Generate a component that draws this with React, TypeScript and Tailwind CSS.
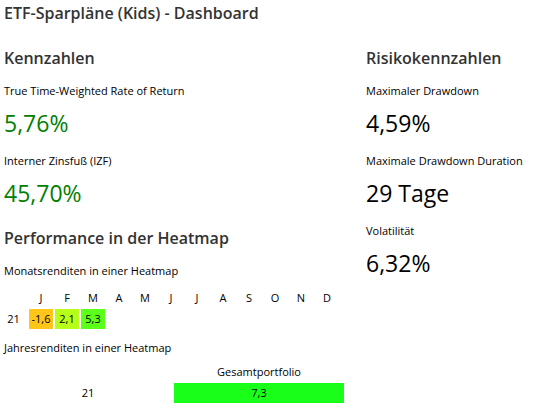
import React from "react";

interface Metric {
    label: string;
    value: string;
    green?: boolean;
}

const kennzahlen: Metric[] = [
    { label: "True Time-Weighted Rate of Return", value: "5,76%", green: true },
    { label: "Interner Zinsfuß (IZF)", value: "45,70%", green: true },
];

const risiko: Metric[] = [
    { label: "Maximaler Drawdown", value: "4,59%" },
    { label: "Maximale Drawdown Duration", value: "29 Tage" },
    { label: "Volatilität", value: "6,32%" },
];

const months = ["J", "F", "M", "A", "M", "J", "J", "A", "S", "O", "N", "D"];

const monthCells = [
    { value: "-1,6", color: "bg-[#ffc61a]" },
    { value: "2,1", color: "bg-[#b7ff1a]" },
    { value: "5,3", color: "bg-[#5bff1a]" },
];

const MetricBlock = ({ metric }: { metric: Metric }): JSX.Element => (
    <div className="h-[70px]">
        <p className="text-[11px] leading-[16px] text-black">{metric.label}</p>
        <p
            className={`mt-[8px] text-[23px] leading-[32px] ${
                metric.green ? "text-[#008000]" : "text-black"
            }`}
        >
            {metric.value}
        </p>
    </div>
);

const App = (): JSX.Element => {
    return (
        <div
            className="w-[558px] h-[419px] bg-white px-[4px] pt-[2px] overflow-hidden"
            style={{ fontFamily: '"Open Sans", "Noto Sans", sans-serif' }}
        >
            <h1 className="text-[16px] leading-[22px] font-semibold text-[#333]">
                ETF-Sparpläne (Kids) - Dashboard
            </h1>

            <div className="flex mt-[23px]">
                {/* linke Spalte */}
                <div className="w-[362px]">
                    <h2 className="text-[16px] leading-[22px] font-semibold text-[#333]">
                        Kennzahlen
                    </h2>
                    <div className="mt-[14px]">
                        {kennzahlen.map((m) => (
                            <MetricBlock key={m.label} metric={m} />
                        ))}
                    </div>

                    <h2 className="mt-[4px] text-[16px] leading-[22px] font-semibold text-[#333]">
                        Performance in der Heatmap
                    </h2>
                    <p className="mt-[14px] text-[11px] leading-[16px] text-black">
                        Monatsrenditen in einer Heatmap
                    </p>

                    {/* Monats-Heatmap */}
                    <div className="mt-[11px] grid grid-cols-[23px_repeat(12,24px)] gap-x-[2px] text-[11px] text-black">
                        <div />
                        {months.map((m, i) => (
                            <div key={i} className="text-center leading-[16px]">
                                {m}
                            </div>
                        ))}
                        <div className="pr-1 text-center leading-[20px] mt-[3px]">21</div>
                        {monthCells.map((c) => (
                            <div
                                key={c.value}
                                className={`${c.color} h-[20px] mt-[3px] text-center leading-[20px]`}
                            >
                                {c.value}
                            </div>
                        ))}
                    </div>

                    <p className="mt-[11px] text-[11px] leading-[16px] text-black">
                        Jahresrenditen in einer Heatmap
                    </p>

                    {/* Jahres-Heatmap */}
                    <div className="mt-[8px] grid grid-cols-[168px_170px] gap-x-[2px] text-[11px] text-black">
                        <div />
                        <div className="text-center leading-[16px]">Gesamtportfolio</div>
                        <div className="text-center leading-[20px] mt-[3px]">21</div>
                        <div className="bg-[#1aff1a] h-[20px] mt-[3px] text-center leading-[20px]">
                            7,3
                        </div>
                    </div>
                </div>

                {/* rechte Spalte */}
                <div className="flex-1">
                    <h2 className="text-[16px] leading-[22px] font-semibold text-[#333]">
                        Risikokennzahlen
                    </h2>
                    <div className="mt-[14px]">
                        {risiko.map((m) => (
                            <MetricBlock key={m.label} metric={m} />
                        ))}
                    </div>
                </div>
            </div>
        </div>
    );
};

export default App;
